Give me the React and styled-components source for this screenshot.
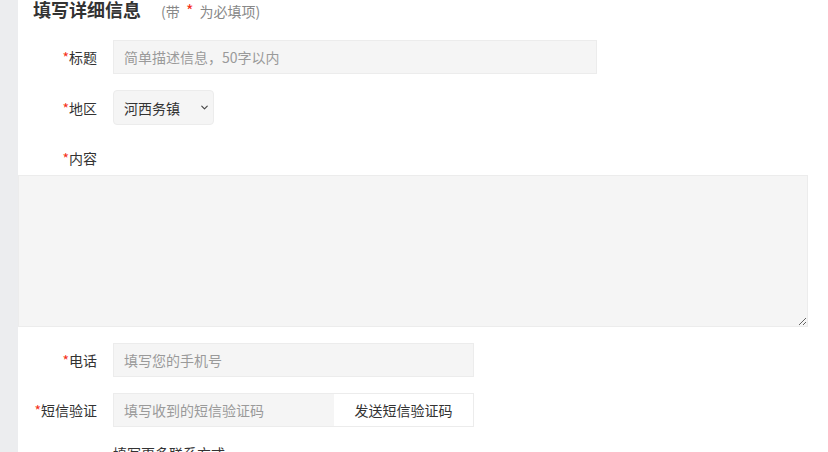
import styled, { createGlobalStyle } from 'styled-components';
import { ChevronDown } from 'lucide-react';

const GlobalStyle = createGlobalStyle`
  html, body {
    margin: 0;
    padding: 0;
    background: #fff;
    overflow: hidden;
  }
  body {
    font-family: "Noto Sans CJK SC", "Noto Sans", sans-serif;
    color: #333;
  }
`;

const App = () => {
  return (
    <>
      <GlobalStyle />
      <Page>
        <SideStrip />
        <Main>
          <Header>
            <Heading>填写详细信息</Heading>
            <Hint>(带 <Star $big>*</Star> 为必填项)</Hint>
          </Header>

          <Row>
            <Label><Star>*</Star>标题</Label>
            <Input placeholder="简单描述信息，50字以内" $width={484} />
          </Row>

          <Row>
            <Label><Star>*</Star>地区</Label>
            <SelectWrap>
              <Select defaultValue="河西务镇">
                <option>河西务镇</option>
              </Select>
              <Chevron size={11} strokeWidth={2.5} />
            </SelectWrap>
          </Row>

          <Row>
            <Label><Star>*</Star>内容</Label>
          </Row>
          <TextArea />

          <Row>
            <Label><Star>*</Star>电话</Label>
            <Input placeholder="填写您的手机号" $width={361} />
          </Row>

          <Row>
            <Label><Star>*</Star>短信验证</Label>
            <CodeGroup>
              <CodeInput placeholder="填写收到的短信验证码" />
              <SendButton>发送短信验证码</SendButton>
            </CodeGroup>
          </Row>

          <Row>
            <Label />
            <MoreLink>填写更多联系方式</MoreLink>
          </Row>
        </Main>
      </Page>
    </>
  );
};

export default App;

const Page = styled.div`
  display: flex;
  width: 828px;
  height: 452px;
  overflow: hidden;
`;

const SideStrip = styled.div`
  width: 18px;
  flex-shrink: 0;
  background: #ecedef;
`;

const Main = styled.div`
  display: flex;
  flex-direction: column;
  width: 790px;
  margin-top: -6px;
  & > * {
    flex-shrink: 0;
  }
`;

const Header = styled.div`
  display: flex;
  align-items: baseline;
  gap: 20px;
  padding-left: 15px;
  height: 30px;
  margin-bottom: 16px;
`;

const Heading = styled.span`
  font-size: 18px;
  font-weight: 700;
  color: #333;
  line-height: 30px;
`;

const Hint = styled.span`
  font-size: 14px;
  color: #888;
`;

const Star = styled.span`
  color: #f5301a;
  font-size: ${p => (p.$big ? '16px' : 'inherit')};
  margin: ${p => (p.$big ? '0 3px' : '0')};
`;

const Row = styled.div`
  display: flex;
  align-items: center;
  gap: 16px;
  min-height: 34px;
  margin-bottom: 16px;
`;

const Label = styled.label`
  width: 79px;
  text-align: right;
  font-size: 14px;
  color: #333;
  flex-shrink: 0;
`;

const Input = styled.input`
  box-sizing: border-box;
  width: ${p => p.$width}px;
  height: 34px;
  padding: 0 10px;
  border: 1px solid #ececec;
  background: #f5f5f5;
  font-family: inherit;
  font-size: 14px;
  color: #333;
  outline: none;
  &::placeholder {
    color: #9a9a9a;
  }
`;

const SelectWrap = styled.div`
  position: relative;
  width: 101px;
  height: 35px;
`;

const Select = styled.select`
  appearance: none;
  box-sizing: border-box;
  width: 100%;
  height: 100%;
  padding: 0 24px 0 10px;
  border: 1px solid #ececec;
  border-radius: 4px;
  background: #f5f5f5;
  font-family: inherit;
  font-size: 14px;
  color: #333;
  outline: none;
`;

const Chevron = styled(ChevronDown)`
  position: absolute;
  right: 4px;
  top: 12px;
  color: #444;
  pointer-events: none;
`;

const TextArea = styled.textarea`
  box-sizing: border-box;
  width: 790px;
  height: 152px;
  margin: -16px 0 16px;
  border: 1px solid #ececec;
  background: #f5f5f5;
  resize: vertical;
  outline: none;
  font-family: inherit;
`;

const CodeGroup = styled.div`
  display: flex;
  width: 361px;
  height: 34px;
  box-sizing: border-box;
  border: 1px solid #ececec;
`;

const CodeInput = styled.input`
  flex: 1;
  min-width: 0;
  padding: 0 10px;
  border: none;
  background: #f5f5f5;
  font-family: inherit;
  font-size: 14px;
  outline: none;
  &::placeholder {
    color: #9a9a9a;
  }
`;

const SendButton = styled.button`
  width: 139px;
  border: none;
  background: #fff;
  font-family: inherit;
  font-size: 14px;
  color: #333;
  cursor: pointer;
`;

const MoreLink = styled.span`
  font-size: 14px;
  color: #333;
  align-self: flex-start;
`;
